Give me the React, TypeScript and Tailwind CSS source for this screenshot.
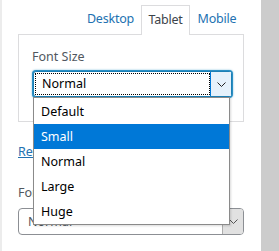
import React from "react";

export default function App() {
  const items = ["Default", "Small", "Normal", "Large", "Huge"];
  return (
    <div
      className="relative flex w-[279px] h-[251px] overflow-hidden bg-white"
      style={{ fontFamily: '"Noto Sans", "Open Sans", sans-serif' }}
    >
      <div className="w-[2px] bg-[#ececec]" />
      <div className="flex-1 pl-[16px] pr-[17px] text-[12px]">
        {/* Tabs */}
        <div className="mt-[5px] flex justify-end h-[29px] text-[12.5px] tracking-[-0.2px]">
          <div className="w-[61px] flex items-center justify-center text-[#2271b1]">Desktop</div>
          <div className="relative z-10 w-[49px] flex items-center justify-center border border-b-0 border-[#dcdcde] bg-white text-[#3c434a] h-[30px]">
            Tablet
          </div>
          <div className="w-[54px] flex items-center justify-center text-[#2271b1]">Mobile</div>
        </div>
        {/* Panel */}
        <div className="border border-[#dcdcde] pt-[12px] pb-[24px] pl-[13px] h-[88px]">
          <div className="leading-[20px] text-[#50575e] text-[12.5px]">Font Size</div>
          <div className="mt-[4px] ml-[1px] flex w-[199px] h-[26px] rounded-[3px] border border-[#1c7fb5] shadow-[0_0_0_1px_#2b8fc4,0_0_2px_1px_rgba(30,140,190,0.6)] bg-white">
            <div className="flex-1 m-[1px] mr-0 flex items-center border border-dotted border-black pl-[6px] text-black text-[12.5px]">
              Normal
            </div>
            <div className="w-[21px] flex items-center justify-center bg-[#e5f1fb] border-l border-[#0078d7]">
              <svg width="9" height="5" viewBox="0 0 9 5">
                <path d="M0.5 0.5 L4.5 4.5 L8.5 0.5" fill="none" stroke="#222" strokeWidth="1" />
              </svg>
            </div>
          </div>
        </div>
        {/* Reset */}
        <div className="mt-[20px] leading-[20px] text-[#2271b1] underline text-[12.5px]">Reset</div>
        {/* Second field */}
        <div className="mt-[21px] leading-[20px] text-[#50575e] text-[12.5px]">Font Weight</div>
        <div className="mt-[5px] flex w-[226px] h-[27px] rounded-[4px] border border-[#8c8f94] bg-white overflow-hidden">
          <div className="flex-1 flex items-center pl-[9px] pt-[2px] text-[#50575e] text-[12.5px]">Normal</div>
          <div className="w-[21px] flex items-center justify-center bg-[#e1e1e1] border-l border-[#adadad]">
            <svg width="9" height="5" viewBox="0 0 9 5">
              <path d="M0.5 0.5 L4.5 4.5 L8.5 0.5" fill="none" stroke="#555" strokeWidth="1" />
            </svg>
          </div>
        </div>
      </div>
      <div className="w-[18px] bg-[#cccccc]" />

      {/* Dropdown list */}
      <div className="absolute left-[33px] top-[97px] w-[197px] h-[128px] border border-[#8a8a8a] bg-white z-20 pt-[1px] text-[12.5px] shadow-[1px_1px_2px_rgba(0,0,0,0.15)]">
        {items.map((it) => (
          <div
            key={it}
            className={
              it === "Small"
                ? "h-[25px] flex items-center pl-[7px] pt-[2px] bg-[#0078d7] text-white"
                : "h-[25px] flex items-center pl-[7px] pt-[2px] text-black"
            }
          >
            {it}
          </div>
        ))}
      </div>
    </div>
  );
}
